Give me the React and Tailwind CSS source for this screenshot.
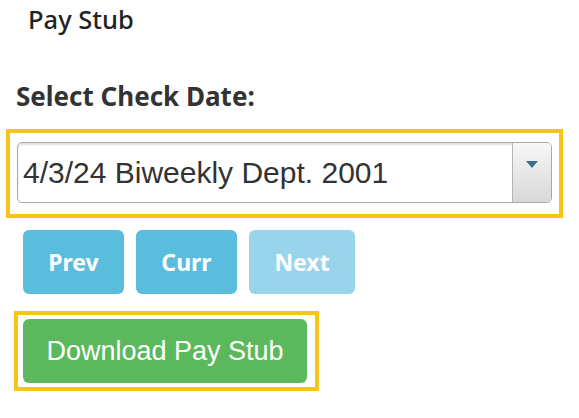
import React from 'react';

const NAV_BTNS = [
  { label: 'Prev', w: 'w-[101px]', disabled: false },
  { label: 'Curr', w: 'w-[101px]', disabled: false },
  { label: 'Next', w: 'w-[106px]', disabled: true },
];

export default function App() {
  return (
    <div className="w-[579px] h-[418px] bg-white overflow-hidden font-['Noto_Sans',sans-serif] text-[#333]">

      {/* ── Title ── */}
      <h1 className="pl-[28px] pt-[3px] h-[32px] text-[25.5px] leading-[32px] font-medium text-[#222]">Pay Stub</h1>

      {/* ── Check date ── */}
      <label className="block mt-[47px] pl-[16px] h-[34px] text-[26px] leading-[34px] font-bold text-[#333]">
        Select Check Date:
      </label>

      <div className="mt-[16px] ml-[6px] w-[557px] h-[89px] border-4 border-[#f8c41c] pt-[9px] px-[7px]">
        <div className="flex h-[61px] rounded-[5px] border border-[#a9a9a9] bg-white shadow-[inset_0_2px_2px_rgba(0,0,0,0.12)] overflow-hidden">
          <div className="flex-1 flex items-center pl-[5px] font-['Liberation_Sans',Arial,sans-serif] text-[30px] text-[#333]">
            4/3/24 Biweekly Dept. 2001
          </div>
          <div className="w-[39px] flex items-start justify-center pt-[18px] border-l border-[#b5b5b5] bg-gradient-to-b from-[#f7f7f7] to-[#d9d9d9]">
            <svg width="12" height="7" viewBox="0 0 12 7">
              <path d="M0 0h12L6 7z" fill="#3f6c88" />
            </svg>
          </div>
        </div>
      </div>

      {/* ── Prev / Curr / Next ── */}
      <div className="flex gap-[12px] mt-[12px] ml-[23px]">
        {NAV_BTNS.map(b => (
          <button key={b.label}
            className={`${b.w} h-[64px] rounded-[6px] text-[23px] font-bold text-white ${b.disabled ? 'bg-[#99d5ea]' : 'bg-[#5bbddd]'}`}>
            {b.label}
          </button>
        ))}
      </div>

      {/* ── Download ── */}
      <div className="mt-[17px] ml-[14px] w-[305px] h-[80px] border-4 border-[#f8c41c] pt-[4px] pl-[5px]">
        <button className="w-[284px] h-[64px] rounded-[6px] bg-[#5cb85c] font-['Liberation_Sans',Arial,sans-serif] text-[27px] text-white">
          Download Pay Stub
        </button>
      </div>
    </div>
  );
}
